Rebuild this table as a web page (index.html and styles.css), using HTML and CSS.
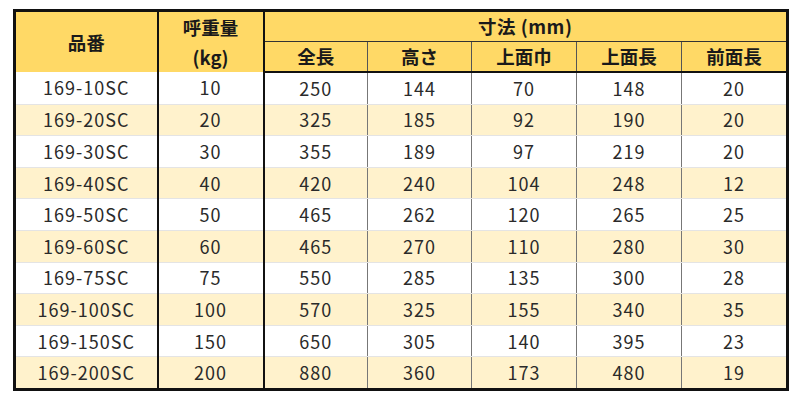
FILE: index.html
```html
<!DOCTYPE html>
<html lang="ja">
<head>
<meta charset="utf-8">
<link rel="stylesheet" href="styles.css">
</head>
<body>
<table class="spec">
<colgroup>
<col class="c-name"><col class="c-load"><col class="c-d1"><col class="c-d2"><col class="c-d3"><col class="c-d4"><col class="c-d5">
</colgroup>
<thead>
<tr class="h1">
<th rowspan="2" class="strong-r">品番</th>
<th rowspan="2" class="strong-r">呼重量<br>(kg)</th>
<th colspan="5" class="dim-title">寸法 (mm)</th>
</tr>
<tr class="h2">
<th>全長</th><th>高さ</th><th>上面巾</th><th>上面長</th><th>前面長</th>
</tr>
</thead>
<tbody>
<tr><td>169-10SC</td><td>10</td><td>250</td><td>144</td><td>70</td><td>148</td><td>20</td></tr>
<tr class="alt"><td>169-20SC</td><td>20</td><td>325</td><td>185</td><td>92</td><td>190</td><td>20</td></tr>
<tr><td>169-30SC</td><td>30</td><td>355</td><td>189</td><td>97</td><td>219</td><td>20</td></tr>
<tr class="alt"><td>169-40SC</td><td>40</td><td>420</td><td>240</td><td>104</td><td>248</td><td>12</td></tr>
<tr><td>169-50SC</td><td>50</td><td>465</td><td>262</td><td>120</td><td>265</td><td>25</td></tr>
<tr class="alt"><td>169-60SC</td><td>60</td><td>465</td><td>270</td><td>110</td><td>280</td><td>30</td></tr>
<tr><td>169-75SC</td><td>75</td><td>550</td><td>285</td><td>135</td><td>300</td><td>28</td></tr>
<tr class="alt"><td>169-100SC</td><td>100</td><td>570</td><td>325</td><td>155</td><td>340</td><td>35</td></tr>
<tr><td>169-150SC</td><td>150</td><td>650</td><td>305</td><td>140</td><td>395</td><td>23</td></tr>
<tr class="alt"><td>169-200SC</td><td>200</td><td>880</td><td>360</td><td>173</td><td>480</td><td>19</td></tr>
</tbody>
</table>
</body>
</html>
```
FILE: styles.css
```css
html, body {
  margin: 0;
  padding: 0;
  background: #ffffff;
}
body {
  padding: 9px 0 0 13px;
  font-family: "Noto Sans CJK JP", "Noto Sans", sans-serif;
  color: #222;
}
.spec {
  border-collapse: collapse;
  table-layout: fixed;
  width: 773px;
  border: 3px solid #111;
}
.c-name { width: 143px; }
.c-load { width: 106px; }
.c-d1 { width: 104px; }
.c-d2 { width: 104px; }
.c-d3 { width: 105px; }
.c-d4 { width: 105px; }
.c-d5 { width: 106px; }

th {
  background: #ffd966;
  font-weight: 700;
  font-size: 18.5px;
  color: #1a1a1a;
  padding: 0;
  text-align: center;
  line-height: 29px;
  border-left: 1px solid #555;
  border-right: 1px solid #555;
}
.h1 th { height: 29px; }
.h1 th.strong-r {
  border-right: 2px solid #111;
  border-left: 2px solid #111;
  line-height: 30px;
}
.h1 th.dim-title {
  border-bottom: 1px solid #333;
  letter-spacing: 0.5px;
}
.h2 th {
  height: 29px;
  border-bottom: 2px solid #111;
}

td {
  font-size: 18px;
  letter-spacing: 1px;
  font-weight: 400;
  text-align: center;
  padding: 0;
  height: 30.6px;
  line-height: 29px;
  color: #2a2a2a;
  border-left: 1px solid #777;
  border-right: 1px solid #777;
  border-bottom: 1px solid #e4e4e4;
}
td:nth-child(1), td:nth-child(2) {
  border-right: 2px solid #111;
}
.alt td {
  background: #fff2cc;
}
```
